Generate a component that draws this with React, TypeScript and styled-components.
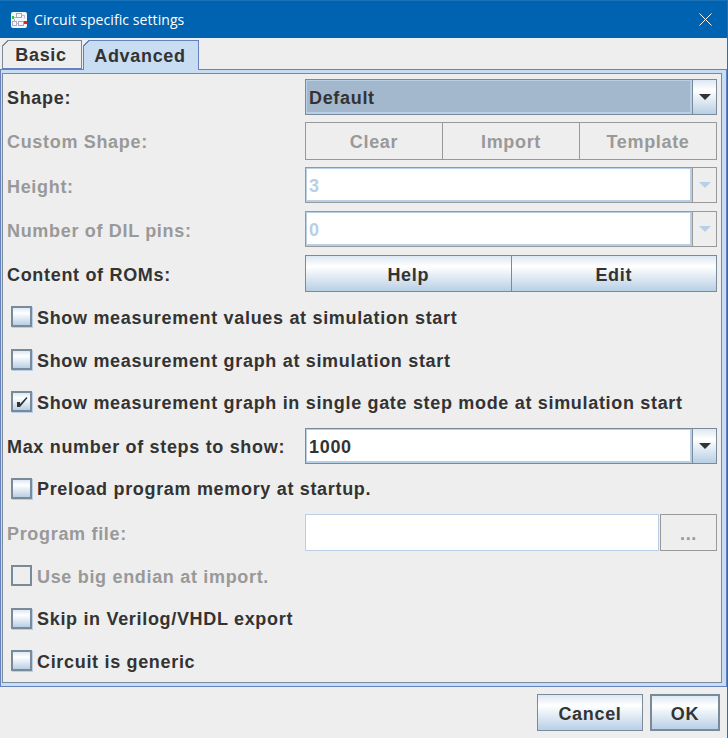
import { ReactNode } from 'react';
import styled, { createGlobalStyle, css } from 'styled-components';

const GlobalStyle = createGlobalStyle`
  html, body {
    margin: 0;
    padding: 0;
    background: #eeeeee;
  }

  * {
    box-sizing: border-box;
  }
`;

const oceanGradient = css`
  background: linear-gradient(180deg, #dde8f3 0%, #ffffff 30%, #b8cfe5 100%);
`;

function AppIcon() {
  return (
    <TitleIconSvg width="16" height="16" viewBox="0 0 16 16">
      <rect width="16" height="16" rx="2" fill="#f4f6f9" />
      <rect x="5.5" y="1.5" width="5" height="4" fill="none" stroke="#9fa9c4" />
      <rect x="7.5" y="9.5" width="5" height="4" fill="none" stroke="#9fa9c4" />
      <rect x="1.5" y="9.5" width="4" height="4" fill="none" stroke="#b3a9c9" />
      <path d="M3 5.5h2M10.5 3.5h3v3M5.5 11.5h2M3.5 9V7" stroke="#b7bfd2" fill="none" />
      <rect x="1" y="4" width="2" height="3" fill="#35c23c" />
      <rect x="13" y="9" width="3" height="3" fill="#e0242a" />
    </TitleIconSvg>
  );
}

function Arrow({ $disabled }: { $disabled?: boolean }) {
  return (
    <svg width="12" height="6" viewBox="0 0 12 6">
      <path d="M0 0h12L6 6z" fill={$disabled ? '#b8cfe5' : '#333333'} />
    </svg>
  );
}

function Combo({
  value,
  disabled,
  selected
}: {
  value: string;
  disabled?: boolean;
  selected?: boolean;
}) {
  return (
    <ComboBox $disabled={disabled}>
      <ComboValue $disabled={disabled} $selected={selected}>
        {value}
      </ComboValue>
      <ComboArrow $disabled={disabled}>
        <Arrow $disabled={disabled} />
      </ComboArrow>
    </ComboBox>
  );
}

function Check({
  children,
  checked,
  disabled,
  tight,
  height = 36
}: {
  children: ReactNode;
  checked?: boolean;
  disabled?: boolean;
  tight?: boolean;
  height?: number;
}) {
  return (
    <CheckRow $height={height}>
      <CheckBox $disabled={disabled}>
        {checked && (
          <svg width="13" height="13" viewBox="0 0 13 13">
            <path d="M2 7h3v2L11.5 2 12.5 3 5 12H2z" fill="#333333" />
          </svg>
        )}
      </CheckBox>
      <CheckLabel $disabled={disabled} $tight={tight}>
        {children}
      </CheckLabel>
    </CheckRow>
  );
}

export default function App() {
  return (
    <Window>
      <GlobalStyle />
      <TitleBar>
        <AppIcon />
        <TitleText>Circuit specific settings</TitleText>
        <CloseIcon width="13" height="13" viewBox="0 0 13 13">
          <path d="M0.5 0.5l12 12M12.5 0.5l-12 12" stroke="#fff" fill="none" />
        </CloseIcon>
      </TitleBar>
      <Tabs>
        <Tab>Basic</Tab>
        <Tab $active>Advanced</Tab>
      </Tabs>
      <TabPane>
        <Form>
          <FieldRow $height={36}>
            <FieldLabel>Shape:</FieldLabel>
            <Combo value="Default" selected />
          </FieldRow>
          <FieldRow $height={38}>
            <FieldLabel $disabled>Custom Shape:</FieldLabel>
            <ButtonGroup>
              <GroupButton $disabled>Clear</GroupButton>
              <GroupButton $disabled>Import</GroupButton>
              <GroupButton $disabled>Template</GroupButton>
            </ButtonGroup>
          </FieldRow>
          <FieldRow $height={37}>
            <FieldLabel $disabled>Height:</FieldLabel>
            <Combo value="3" disabled />
          </FieldRow>
          <FieldRow $height={37}>
            <FieldLabel $disabled>Number of DIL pins:</FieldLabel>
            <Combo value="0" disabled />
          </FieldRow>
          <FieldRow $height={37}>
            <FieldLabel>Content of ROMs:</FieldLabel>
            <ButtonGroup>
              <GroupButton>Help</GroupButton>
              <GroupButton>Edit</GroupButton>
            </ButtonGroup>
          </FieldRow>
          <Check>Show measurement values at simulation start</Check>
          <Check height={35}>Show measurement graph at simulation start</Check>
          <Check checked height={37}>
            Show measurement graph in single gate step mode at simulation start
          </Check>
          <FieldRow $height={36}>
            <FieldLabel>Max number of steps to show:</FieldLabel>
            <Combo value="1000" />
          </FieldRow>
          <Check tight>Preload program memory at startup.</Check>
          <FieldRow $height={37}>
            <FieldLabel $disabled>Program file:</FieldLabel>
            <FileField>
              <FileInput />
              <BrowseButton>...</BrowseButton>
            </FileField>
          </FieldRow>
          <Check disabled>Use big endian at import.</Check>
          <Check tight height={35}>
            Skip in Verilog/VHDL export
          </Check>
          <Check>Circuit is generic</Check>
        </Form>
      </TabPane>
      <Footer>
        <DialogButton $width={106}>Cancel</DialogButton>
        <DialogButton $width={70} $default>
          OK
        </DialogButton>
      </Footer>
    </Window>
  );
}

const Window = styled.div`
  width: 728px;
  height: 738px;
  background: #eeeeee;
  color: #333333;
  font-family: 'Liberation Sans', Arial, sans-serif;
  font-size: 18px;
  font-weight: bold;
  letter-spacing: 0.68px;
  border-right: 1px solid #2f6ea8;
  overflow: hidden;
`;

const TitleBar = styled.div`
  display: flex;
  align-items: center;
  height: 38px;
  padding: 0 15px 0 11px;
  background: #0063b1;
  border-top: 1px solid #1a72b9;
`;

const TitleIconSvg = styled.svg`
  flex: none;
`;

const TitleText = styled.span`
  flex: 1;
  margin-left: 7px;
  color: #ffffff;
  font-family: 'Open Sans', sans-serif;
  font-size: 14px;
  font-weight: 400;
  letter-spacing: 0.08px;
`;

const CloseIcon = styled.svg`
  flex: none;
`;

const Tabs = styled.div`
  display: flex;
  align-items: flex-end;
  height: 31px;
  padding: 2px 0 0 2px;
  gap: 1px;
`;

const Tab = styled.div<{ $active?: boolean }>`
  position: relative;
  display: flex;
  align-items: center;
  justify-content: center;
  height: ${p => (p.$active ? '30px' : '29px')};
  width: ${p => (p.$active ? '116px' : '80px')};
  margin-bottom: ${p => (p.$active ? '-1px' : '0')};
  padding: ${p => (p.$active ? '1px' : '2px')} 2px 0 0;
  background: ${p => (p.$active ? '#c8ddf2' : '#eeeeee')};
  border: 1px solid ${p => (p.$active ? '#6382bf' : '#7a8a99')};
  border-bottom: ${p => (p.$active ? 'none' : '1px solid #6382bf')};
  z-index: ${p => (p.$active ? 1 : 0)};

  &::before {
    content: '';
    position: absolute;
    top: -1px;
    left: -1px;
    width: 6px;
    height: 6px;
    background: linear-gradient(
      135deg,
      #eeeeee 0 45%,
      ${p => (p.$active ? '#6382bf' : '#7a8a99')} 45% 60%,
      transparent 60%
    );
  }
`;

const TabPane = styled.div`
  height: 618px;
  padding: 3px 4px 3px 1px;
  background: #c8ddf2;
  border: 1px solid #6382bf;
`;

const Form = styled.div`
  display: flex;
  flex-direction: column;
  gap: 7px;
  height: 100%;
  padding: 5px 4px 0 4px;
  background: #eeeeee;
  border: 1px solid #7a8a99;
`;

const FieldRow = styled.div<{ $height: number }>`
  display: grid;
  grid-template-columns: 298px 1fr;
  align-items: start;
  height: ${p => p.$height}px;
`;

const FieldLabel = styled.span<{ $disabled?: boolean }>`
  align-self: center;
  padding-top: 3px;
  color: ${p => (p.$disabled ? '#999999' : '#333333')};
  white-space: nowrap;
`;

const ComboBox = styled.div<{ $disabled?: boolean }>`
  display: flex;
  height: 36px;
  border: 1px solid ${p => (p.$disabled ? '#999999' : '#7a8a99')};
  background: #ffffff;
`;

const ComboValue = styled.div<{ $disabled?: boolean; $selected?: boolean }>`
  flex: 1;
  display: flex;
  align-items: center;
  padding: 3px 0 0 2px;
  color: ${p => (p.$disabled ? '#b8cfe5' : '#333333')};
  background: ${p => (p.$selected ? '#a3b8cc' : '#ffffff')};
  border: 2px solid #b8cfe5;
  border-width: 1px 2px 2px 1px;
`;

const ComboArrow = styled.div<{ $disabled?: boolean }>`
  flex: none;
  display: flex;
  align-items: center;
  justify-content: center;
  width: 24px;
  border-left: 1px solid ${p => (p.$disabled ? '#999999' : '#7a8a99')};
  ${p =>
    p.$disabled
      ? css`
          background: #eeeeee;
        `
      : oceanGradient}
`;

const ButtonGroup = styled.div`
  display: flex;
  height: 100%;
`;

const GroupButton = styled.div<{ $disabled?: boolean }>`
  flex: 1;
  display: flex;
  align-items: center;
  justify-content: center;
  padding-top: 3px;
  border: 1px solid ${p => (p.$disabled ? '#999999' : '#7a8a99')};
  color: ${p => (p.$disabled ? '#999999' : '#333333')};
  ${p => !p.$disabled && oceanGradient}

  & + & {
    margin-left: ${p => (p.$disabled ? '0' : '-1px')};
  }
`;

const CheckRow = styled.div<{ $height: number }>`
  display: flex;
  align-items: flex-start;
  height: ${p => p.$height}px;
  padding: 7px 0 0 4px;
`;

const CheckBox = styled.div<{ $disabled?: boolean }>`
  flex: none;
  display: flex;
  align-items: center;
  justify-content: center;
  width: 21px;
  height: 21px;
  border: 2px solid #7a8a99;
  ${p =>
    p.$disabled
      ? css`
          background: #eeeeee;
        `
      : css`
          box-shadow: 1px 1px 0 #b8cfe5;
          ${oceanGradient}
        `}
`;

const CheckLabel = styled.span<{ $disabled?: boolean; $tight?: boolean }>`
  margin: ${p => (p.$tight ? '1px' : '2px')} 0 0 5px;
  color: ${p => (p.$disabled ? '#999999' : '#333333')};
  white-space: nowrap;
`;

const FileField = styled.div`
  display: flex;
  height: 37px;
  gap: 1px;
`;

const FileInput = styled.div`
  flex: 1;
  background: #ffffff;
  border: 1px solid #b8cfe5;
`;

const BrowseButton = styled.div`
  flex: none;
  display: flex;
  align-items: center;
  justify-content: center;
  width: 57px;
  padding-top: 3px;
  color: #999999;
  border: 1px solid #999999;
`;

const Footer = styled.div`
  display: flex;
  justify-content: flex-end;
  align-items: flex-start;
  gap: 7px;
  padding: 7px 7px 0 0;
`;

const DialogButton = styled.div<{ $width: number; $default?: boolean }>`
  display: flex;
  align-items: center;
  justify-content: center;
  width: ${p => p.$width}px;
  height: 37px;
  padding-top: 3px;
  border: ${p => (p.$default ? '2px' : '1px')} solid #7a8a99;
  ${oceanGradient}
`;
